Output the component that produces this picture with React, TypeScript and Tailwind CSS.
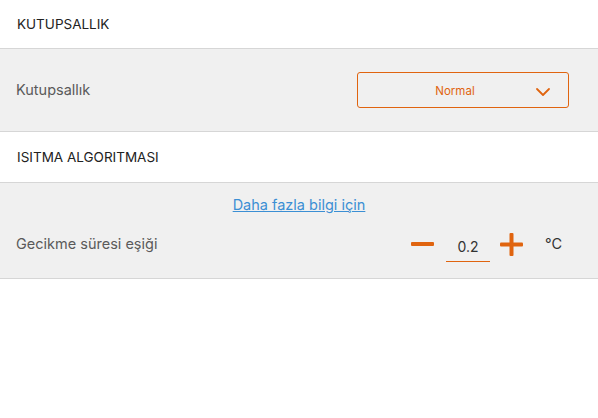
import { ChevronDown } from 'lucide-react';

const font = { fontFamily: 'Inter, "Open Sans", sans-serif' };

function SectionHeader({ title, h }: { title: string; h: string }) {
  return (
    <div className={`${h} flex items-center px-[17px] border-b border-[#d6d6d6] bg-white`}>
      <span className="text-[13.5px] text-[#222]">{title}</span>
    </div>
  );
}

export default function App() {
  return (
    <div className="w-[598px] h-[418px] bg-white" style={font}>
      {/* Kutupsallik */}
      <SectionHeader title="KUTUPSALLIK" h="h-[49px]" />
      <div className="h-[83px] bg-[#f0f0f0] border-b border-[#d6d6d6] flex items-center justify-between pl-[16px] pr-[29px]">
        <span className="text-[14.5px] text-[#5a5a5a]">Kutupsallık</span>
        <button className="w-[212px] h-[36px] border border-[#e0640f] rounded-[3px] flex items-center relative">
          <span className="flex-1 text-center text-[11.5px] text-[#e0640f] pr-[16px] pt-[3px]">Normal</span>
          <ChevronDown className="absolute right-[13px] top-[7px] text-[#e0640f]" size={24} strokeWidth={1.8} />
        </button>
      </div>

      {/* Isitma algoritmasi */}
      <SectionHeader title="ISITMA ALGORITMASI" h="h-[51px]" />
      <div className="h-[96px] bg-[#f0f0f0] border-b border-[#d6d6d6] flex flex-col">
        <div className="pt-[11px] flex justify-center">
          <a className="text-[14.5px] text-[#3b8fd4] underline">Daha fazla bilgi için</a>
        </div>
        <div className="flex items-center justify-between pl-[16px] pr-[36px] mt-[11px]">
          <span className="text-[14.5px] text-[#5a5a5a]">Gecikme süresi eşiği</span>
          <div className="flex items-center">
            <div className="w-[23px] h-[4px] bg-[#e0640f] rounded-[1px]" />
            <div className="w-[44px] ml-[12px] border-b border-[#e0640f] text-center text-[14px] text-[#333] pt-[2px] pb-[4px] mt-[7px]">0.2</div>
            <svg width="23" height="23" viewBox="0 0 23 23" className="ml-[10px]">
              <rect x="0" y="9.5" width="23" height="4" rx="1" fill="#e0640f" />
              <rect x="9.5" y="0" width="4" height="23" rx="1" fill="#e0640f" />
            </svg>
            <span className="ml-[22px] text-[14.5px] text-[#333]">°C</span>
          </div>
        </div>
      </div>
    </div>
  );
}
